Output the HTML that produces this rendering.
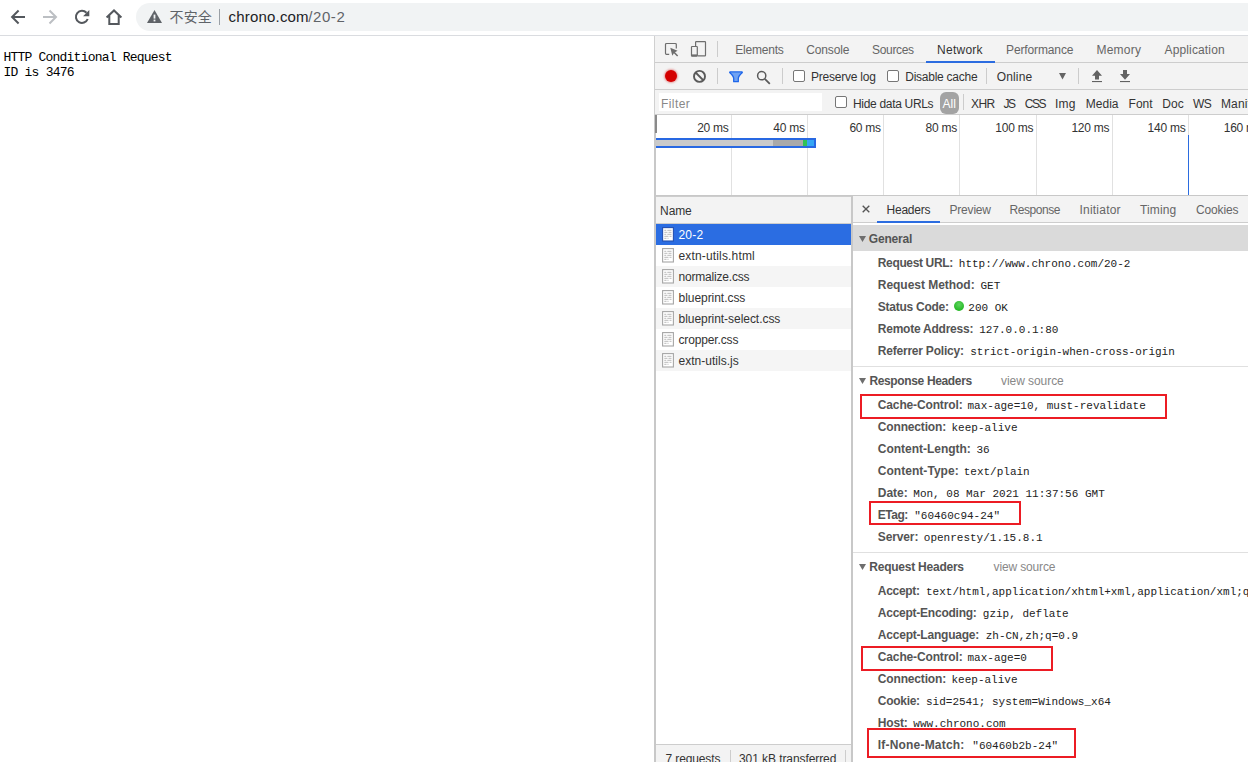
<!DOCTYPE html>
<html lang="zh"><head><meta charset="utf-8"><title>chrono.com/20-2</title>
<style>
html,body{margin:0;padding:0;background:#fff;}
body{width:1248px;height:762px;position:relative;overflow:hidden;font-family:'Liberation Sans','Noto Sans CJK SC',sans-serif;}
.a{position:absolute;}
.t{position:absolute;white-space:pre;}
#texts{position:absolute;left:0;top:0;width:1248px;height:762px;overflow:hidden;}
svg{position:absolute;overflow:visible;}
.cb{position:absolute;width:10px;height:10px;border:1px solid #767676;border-radius:2px;background:#fff;}
.sep{position:absolute;width:1px;height:16px;background:#ccc;}
.fi{position:absolute;width:12px;height:14px;}
.rb{position:absolute;border:2px solid #ec1c24;box-sizing:border-box;}

</style></head>
<body>
<!-- browser toolbar -->
<div class="a" style="left:0;top:0;width:1248px;height:35px;background:#fff;"></div>
<div class="a" style="left:136px;top:3px;width:1130px;height:28px;border-radius:14px;background:#f1f3f4;"></div>
<div class="a" style="left:0;top:35px;width:1248px;height:1px;background:#dadce0;"></div>
<!-- nav icons -->
<svg style="left:0;top:0" width="134" height="35" viewBox="0 0 134 35" fill="none" stroke-linecap="butt" stroke-linejoin="miter">
<path d="M25 17H13M18.600 10.500 12.100 17l6.500 6.500" stroke="#54585d" stroke-width="2"/>
<path d="M43 17h12M49.500 10.500 56 17l-6.500 6.500" stroke="#bcbfc3" stroke-width="2"/>
<path d="M86.500 12.700A6.100 6.100 0 1 0 87.700 19" stroke="#54585d" stroke-width="2"/>
<path d="M89.300 10v6.200h-6.200z" fill="#54585d" stroke="none"/>
<path d="M106.600 17.400 114 10.400l7.400 7M109.300 15.500v8.400h9.400v-8.400" stroke="#54585d" stroke-width="2"/>
</svg>
<svg style="left:147px;top:10px" width="15" height="13" viewBox="0 0 15 13"><path d="M7.5 0 15 13H0z" fill="#5f6368"/><rect x="6.600" y="4.600" width="1.8" height="4" fill="#f1f3f4"/><rect x="6.600" y="9.600" width="1.800" height="1.800" fill="#f1f3f4"/></svg>
<div class="a" style="left:219px;top:9px;width:1px;height:16px;background:#9aa0a6;"></div>

<!-- devtools frame -->
<div class="a" style="left:654px;top:36px;width:1px;height:79px;background:#d0d0d0;"></div>
<div class="a" style="left:654px;top:115px;width:2px;height:647px;background:#c8c8c8;z-index:2;"></div>
<div class="a" style="left:655px;top:36px;width:593px;height:79px;background:#f3f3f3;"></div>
<div class="a" style="left:655px;top:62px;width:593px;height:1px;background:#cdcdcd;"></div>
<div class="a" style="left:655px;top:89px;width:593px;height:1px;background:#cdcdcd;"></div>
<div class="a" style="left:655px;top:114px;width:593px;height:1px;background:#cdcdcd;"></div>
<!-- network tab underline -->
<div class="a" style="left:926px;top:61px;width:69px;height:2px;background:#2b6ce0;"></div>
<!-- tabbar icons -->
<svg style="left:664px;top:42px" width="16" height="16" viewBox="0 0 16 16"><path d="M12.300 6.500V2.500a1 1 0 0 0-1-1H2.500a1 1 0 0 0-1 1v8.800a1 1 0 0 0 1 1h2.700" fill="none" stroke="#6e6e6e" stroke-width="1.200"/><path d="M6.300 5.800l2 8 1.600-2.500 3.200 3.200 1.100-1.100-3.200-3.200 2.600-1.500z" fill="#6e6e6e"/></svg>
<svg style="left:690px;top:40px" width="17" height="18" viewBox="0 0 17 18"><path d="M5.600 6V2.200a.6.600 0 0 1 .6-.6h8.700a.6.600 0 0 1 .6.600v13.100a.6.600 0 0 1-.6.600H8" fill="none" stroke="#6e6e6e" stroke-width="1.200"/><rect x="1.500" y="6.500" width="5.800" height="9.600" rx=".6" fill="#f3f3f3" stroke="#6e6e6e" stroke-width="1.200"/><rect x="1.500" y="14.400" width="5.800" height="1.800" fill="#6e6e6e"/></svg>
<div class="sep" style="left:717px;top:41px;"></div>
<!-- toolbar 2 icons -->
<div class="a" style="left:665px;top:70px;width:12px;height:12px;border-radius:6px;background:#d40000;box-shadow:0 0 2px 1px rgba(212,0,0,.35);"></div>
<svg style="left:692px;top:69px" width="15" height="15" viewBox="0 0 15 15"><circle cx="7.500" cy="7.400" r="5.500" fill="none" stroke="#5a5a5a" stroke-width="1.900"/><path d="M3.600 3.500l7.800 7.800" stroke="#5a5a5a" stroke-width="1.900"/></svg>
<div class="sep" style="left:717px;top:68px;"></div>
<svg style="left:729px;top:71px" width="14" height="12" viewBox="0 0 14 12"><path d="M1.200.900h11.600q.9.100.3.900Q9.300 5.200 9.300 7.500v3.200H4.700V7.500Q4.700 5.200.9 1.800.3 1 1.200.9z" fill="#6fa2f3" stroke="#1e66ea" stroke-width="1.300" stroke-linejoin="round"/></svg>
<svg style="left:756.300px;top:69.600px" width="15" height="15" viewBox="0 0 15 15"><circle cx="5.700" cy="5.700" r="4.100" fill="none" stroke="#5a5a5a" stroke-width="1.500"/><path d="M8.800 8.800l5 5" stroke="#5a5a5a" stroke-width="1.800"/></svg>
<div class="sep" style="left:782px;top:68px;"></div>
<div class="cb" style="left:793px;top:70px;"></div>
<div class="cb" style="left:887px;top:70px;"></div>
<div class="sep" style="left:986px;top:68px;"></div>
<svg style="left:1059px;top:73px" width="7" height="7" viewBox="0 0 7 7"><path d="M0 0h7L3.500 6.500z" fill="#646464"/></svg>
<div class="sep" style="left:1078px;top:68px;"></div>
<svg style="left:1091px;top:70px" width="12" height="13" viewBox="0 0 12 13"><path d="M6 0l5 5.800H8v3.700H4V5.800H1z" fill="#626262"/><rect x="1" y="11" width="10" height="1.100" fill="#626262"/></svg>
<svg style="left:1119px;top:70px" width="12" height="13" viewBox="0 0 12 13"><path d="M6 9.700l5-5.800H8V0H4v3.900H1z" fill="#626262"/><rect x="1" y="11" width="10" height="1.100" fill="#626262"/></svg>
<!-- filter row -->
<div class="a" style="left:659px;top:93px;width:163px;height:18px;background:#fff;"></div>
<div class="cb" style="left:835px;top:96px;"></div>
<div class="a" style="left:940px;top:92px;width:19px;height:22px;border-radius:6px;background:#a3a3a3;"></div>
<div class="sep" style="left:963px;top:94px;height:16px;"></div>

<!-- overview -->
<div class="a" style="left:655px;top:115px;width:593px;height:80px;background:#fff;"></div>
<div class="a" style="left:731px;top:115px;width:1px;height:80px;background:#e1e1e1;"></div>
<div class="a" style="left:807px;top:115px;width:1px;height:80px;background:#e1e1e1;"></div>
<div class="a" style="left:883px;top:115px;width:1px;height:80px;background:#e1e1e1;"></div>
<div class="a" style="left:959px;top:115px;width:1px;height:80px;background:#e1e1e1;"></div>
<div class="a" style="left:1036px;top:115px;width:1px;height:80px;background:#e1e1e1;"></div>
<div class="a" style="left:1112px;top:115px;width:1px;height:80px;background:#e1e1e1;"></div>
<div class="a" style="left:1188px;top:115px;width:1px;height:80px;background:#e1e1e1;"></div>
<div class="a" style="left:1188px;top:135px;width:1px;height:60px;background:#2b6ce0;"></div>
<div class="a" style="left:655px;top:115px;width:2px;height:18px;background:#8a8a8a;z-index:3;"></div>
<!-- waterfall bar -->
<div class="a" style="left:655px;top:138px;width:161px;height:10px;background:#2868e2;"></div>
<div class="a" style="left:655px;top:140px;width:118px;height:6px;background:#cacaca;"></div>
<div class="a" style="left:773px;top:140px;width:30px;height:6px;background:#a9a9a9;"></div>
<div class="a" style="left:803px;top:140px;width:4px;height:6px;background:#2fc256;"></div>
<div class="a" style="left:807px;top:140px;width:7px;height:6px;background:#35a6f4;"></div>

<!-- split: names + details -->
<div class="a" style="left:655px;top:195px;width:593px;height:1px;background:#c8c8c8;"></div>
<div class="a" style="left:655px;top:196px;width:196px;height:1px;background:#cdcdcd;"></div>
<div class="a" style="left:655px;top:197px;width:196px;height:26px;background:#f3f3f3;"></div>
<div class="a" style="left:655px;top:223px;width:196px;height:1px;background:#cdcdcd;"></div>
<div class="a" style="left:655px;top:224px;width:196px;height:520px;background:#fff;"></div>
<div class="a" style="left:655px;top:224px;width:196px;height:21px;background:#2b6de2;"></div>
<div class="a" style="left:655px;top:266px;width:196px;height:21px;background:#f5f5f5;"></div>
<div class="a" style="left:655px;top:308px;width:196px;height:21px;background:#f5f5f5;"></div>
<div class="a" style="left:655px;top:350px;width:196px;height:21px;background:#f5f5f5;"></div>
<div class="a" style="left:851px;top:195px;width:2px;height:567px;background:#c8c8c8;"></div>
<!-- status bar -->
<div class="a" style="left:655px;top:744px;width:196px;height:1px;background:#cdcdcd;"></div>
<div class="a" style="left:655px;top:745px;width:196px;height:17px;background:#f3f3f3;"></div>
<div class="a" style="left:730px;top:750px;width:1px;height:12px;background:#cdcdcd;"></div>
<div class="a" style="left:845px;top:750px;width:1px;height:12px;background:#cdcdcd;"></div>
<!-- file icons -->
<svg style="left:662px;top:227.4px" width="12" height="15" viewBox="0 0 12 15"><rect x=".6" y=".6" width="10.800" height="13.400" fill="#fff" stroke="#2450b0" stroke-width="1.100"/><path d="M2.300 3.300h2M5.300 3.300h4.200M2.300 5.300h3.200M6.500 5.300h3M2.300 7.300h2M5.300 7.300h4.200M2.300 9.300h4.200M7.500 9.300h2M2.300 11.300h2.200M5.500 11.300h1" stroke="#bababa" stroke-width="1"/></svg>
<svg style="left:662px;top:248.4px" width="12" height="15" viewBox="0 0 12 15"><rect x=".6" y=".6" width="10.800" height="13.400" fill="#fff" stroke="#a6a6a6" stroke-width="1.100"/><path d="M2.300 3.300h2M5.300 3.300h4.200M2.300 5.300h3.200M6.500 5.300h3M2.300 7.300h2M5.300 7.300h4.200M2.300 9.300h4.200M7.500 9.300h2M2.300 11.300h2.200M5.500 11.300h1" stroke="#bababa" stroke-width="1"/></svg>
<svg style="left:662px;top:269.4px" width="12" height="15" viewBox="0 0 12 15"><rect x=".6" y=".6" width="10.800" height="13.400" fill="#fff" stroke="#a6a6a6" stroke-width="1.100"/><path d="M2.300 3.300h2M5.300 3.300h4.200M2.300 5.300h3.200M6.500 5.300h3M2.300 7.300h2M5.300 7.300h4.200M2.300 9.300h4.200M7.500 9.300h2M2.300 11.300h2.200M5.500 11.300h1" stroke="#bababa" stroke-width="1"/></svg>
<svg style="left:662px;top:290.4px" width="12" height="15" viewBox="0 0 12 15"><rect x=".6" y=".6" width="10.800" height="13.400" fill="#fff" stroke="#a6a6a6" stroke-width="1.100"/><path d="M2.300 3.300h2M5.300 3.300h4.200M2.300 5.300h3.200M6.500 5.300h3M2.300 7.300h2M5.300 7.300h4.200M2.300 9.300h4.200M7.500 9.300h2M2.300 11.300h2.200M5.500 11.300h1" stroke="#bababa" stroke-width="1"/></svg>
<svg style="left:662px;top:311.4px" width="12" height="15" viewBox="0 0 12 15"><rect x=".6" y=".6" width="10.800" height="13.400" fill="#fff" stroke="#a6a6a6" stroke-width="1.100"/><path d="M2.300 3.300h2M5.300 3.300h4.200M2.300 5.300h3.200M6.500 5.300h3M2.300 7.300h2M5.300 7.300h4.200M2.300 9.300h4.200M7.500 9.300h2M2.300 11.300h2.200M5.500 11.300h1" stroke="#bababa" stroke-width="1"/></svg>
<svg style="left:662px;top:332.4px" width="12" height="15" viewBox="0 0 12 15"><rect x=".6" y=".6" width="10.800" height="13.400" fill="#fff" stroke="#a6a6a6" stroke-width="1.100"/><path d="M2.300 3.300h2M5.300 3.300h4.200M2.300 5.300h3.200M6.500 5.300h3M2.300 7.300h2M5.300 7.300h4.200M2.300 9.300h4.200M7.500 9.300h2M2.300 11.300h2.200M5.500 11.300h1" stroke="#bababa" stroke-width="1"/></svg>
<svg style="left:662px;top:353.4px" width="12" height="15" viewBox="0 0 12 15"><rect x=".6" y=".6" width="10.800" height="13.400" fill="#fff" stroke="#a6a6a6" stroke-width="1.100"/><path d="M2.300 3.300h2M5.300 3.300h4.200M2.300 5.300h3.200M6.500 5.300h3M2.300 7.300h2M5.300 7.300h4.200M2.300 9.300h4.200M7.500 9.300h2M2.300 11.300h2.200M5.500 11.300h1" stroke="#bababa" stroke-width="1"/></svg>
<!-- details pane -->
<div class="a" style="left:853px;top:196px;width:395px;height:26px;background:#f3f3f3;"></div>
<div class="a" style="left:853px;top:222px;width:395px;height:1px;background:#cdcdcd;"></div>
<div class="a" style="left:877px;top:221px;width:63px;height:2px;background:#2b6ce0;"></div>
<div class="a" style="left:853px;top:223px;width:395px;height:539px;background:#fff;"></div>
<div class="a" style="left:853px;top:225px;width:395px;height:26px;background:#dadada;"></div>
<svg style="left:862px;top:204.500px" width="8" height="8" viewBox="0 0 8 8"><path d="M.7.700l6.600 6.600M7.300.7L.7 7.300" stroke="#555" stroke-width="1.350"/></svg>
<svg style="left:859px;top:236px" width="7" height="6" viewBox="0 0 7 6"><path d="M0 0h7L3.500 6z" fill="#6e6e6e"/></svg>
<svg style="left:859px;top:378px" width="7" height="6" viewBox="0 0 7 6"><path d="M0 0h7L3.500 6z" fill="#6e6e6e"/></svg>
<svg style="left:859px;top:564px" width="7" height="6" viewBox="0 0 7 6"><path d="M0 0h7L3.500 6z" fill="#6e6e6e"/></svg>
<div class="a" style="left:853px;top:366px;width:395px;height:1px;background:#e0e0e0;"></div>
<div class="a" style="left:853px;top:552px;width:395px;height:1px;background:#e0e0e0;"></div>
<div class="a" style="left:954px;top:301px;width:10px;height:10px;border-radius:5px;background:radial-gradient(circle at 50% 35%,#5fd45f,#0fae0f);"></div>

<div id="texts">
<span class="t" style="left:735.20px;top:44.00px;font:normal 12px/1 'Liberation Sans','Noto Sans CJK SC',sans-serif;color:#666;letter-spacing:-0.204px;">Elements</span>
<span class="t" style="left:806.30px;top:44.00px;font:normal 12px/1 'Liberation Sans','Noto Sans CJK SC',sans-serif;color:#666;letter-spacing:-0.147px;">Console</span>
<span class="t" style="left:872.10px;top:44.00px;font:normal 12px/1 'Liberation Sans','Noto Sans CJK SC',sans-serif;color:#666;letter-spacing:-0.347px;">Sources</span>
<span class="t" style="left:937.10px;top:44.00px;font:normal 12px/1 'Liberation Sans','Noto Sans CJK SC',sans-serif;color:#333;letter-spacing:0.241px;">Network</span>
<span class="t" style="left:1006.10px;top:44.00px;font:normal 12px/1 'Liberation Sans','Noto Sans CJK SC',sans-serif;color:#666;letter-spacing:-0.137px;">Performance</span>
<span class="t" style="left:1096.50px;top:44.00px;font:normal 12px/1 'Liberation Sans','Noto Sans CJK SC',sans-serif;color:#666;letter-spacing:0.209px;">Memory</span>
<span class="t" style="left:1164.50px;top:44.00px;font:normal 12px/1 'Liberation Sans','Noto Sans CJK SC',sans-serif;color:#666;letter-spacing:0.144px;">Application</span>
<span class="t" style="left:811.00px;top:71.00px;font:normal 12px/1 'Liberation Sans','Noto Sans CJK SC',sans-serif;color:#333;letter-spacing:-0.231px;">Preserve log</span>
<span class="t" style="left:905.30px;top:71.00px;font:normal 12px/1 'Liberation Sans','Noto Sans CJK SC',sans-serif;color:#333;letter-spacing:-0.260px;">Disable cache</span>
<span class="t" style="left:996.70px;top:71.00px;font:normal 12px/1 'Liberation Sans','Noto Sans CJK SC',sans-serif;color:#333;letter-spacing:0.152px;">Online</span>
<span class="t" style="left:661.00px;top:98.00px;font:normal 12px/1 'Liberation Sans','Noto Sans CJK SC',sans-serif;color:#888;letter-spacing:0.438px;">Filter</span>
<span class="t" style="left:853.00px;top:98.00px;font:normal 12px/1 'Liberation Sans','Noto Sans CJK SC',sans-serif;color:#333;letter-spacing:-0.316px;">Hide data URLs</span>
<span class="t" style="left:942.50px;top:98.00px;font:normal 12px/1 'Liberation Sans','Noto Sans CJK SC',sans-serif;color:#fff;letter-spacing:-0.015px;">All</span>
<span class="t" style="left:971.00px;top:98.00px;font:normal 12px/1 'Liberation Sans','Noto Sans CJK SC',sans-serif;color:#333;letter-spacing:-0.615px;">XHR</span>
<span class="t" style="left:1003.40px;top:98.00px;font:normal 12px/1 'Liberation Sans','Noto Sans CJK SC',sans-serif;color:#333;letter-spacing:-1.358px;">JS</span>
<span class="t" style="left:1024.70px;top:98.00px;font:normal 12px/1 'Liberation Sans','Noto Sans CJK SC',sans-serif;color:#333;letter-spacing:-1.462px;">CSS</span>
<span class="t" style="left:1055.00px;top:98.00px;font:normal 12px/1 'Liberation Sans','Noto Sans CJK SC',sans-serif;color:#333;letter-spacing:0.161px;">Img</span>
<span class="t" style="left:1085.70px;top:98.00px;font:normal 12px/1 'Liberation Sans','Noto Sans CJK SC',sans-serif;color:#333;letter-spacing:0.042px;">Media</span>
<span class="t" style="left:1128.50px;top:98.00px;font:normal 12px/1 'Liberation Sans','Noto Sans CJK SC',sans-serif;color:#333;letter-spacing:0.046px;">Font</span>
<span class="t" style="left:1162.30px;top:98.00px;font:normal 12px/1 'Liberation Sans','Noto Sans CJK SC',sans-serif;color:#333;letter-spacing:0.019px;">Doc</span>
<span class="t" style="left:1193.00px;top:98.00px;font:normal 12px/1 'Liberation Sans','Noto Sans CJK SC',sans-serif;color:#333;letter-spacing:-0.522px;">WS</span>
<span class="t" style="left:1221.00px;top:98.00px;font:normal 12px/1 'Liberation Sans','Noto Sans CJK SC',sans-serif;color:#333;letter-spacing:0.118px;">Manifest</span>
<span class="t" style="left:697.16px;top:122.00px;font:normal 12px/1 'Liberation Sans','Noto Sans CJK SC',sans-serif;color:#333;letter-spacing:-0.250px;">20 ms</span>
<span class="t" style="left:773.30px;top:122.00px;font:normal 12px/1 'Liberation Sans','Noto Sans CJK SC',sans-serif;color:#333;letter-spacing:-0.250px;">40 ms</span>
<span class="t" style="left:849.44px;top:122.00px;font:normal 12px/1 'Liberation Sans','Noto Sans CJK SC',sans-serif;color:#333;letter-spacing:-0.250px;">60 ms</span>
<span class="t" style="left:925.58px;top:122.00px;font:normal 12px/1 'Liberation Sans','Noto Sans CJK SC',sans-serif;color:#333;letter-spacing:-0.250px;">80 ms</span>
<span class="t" style="left:995.30px;top:122.00px;font:normal 12px/1 'Liberation Sans','Noto Sans CJK SC',sans-serif;color:#333;letter-spacing:-0.250px;">100 ms</span>
<span class="t" style="left:1071.44px;top:122.00px;font:normal 12px/1 'Liberation Sans','Noto Sans CJK SC',sans-serif;color:#333;letter-spacing:-0.250px;">120 ms</span>
<span class="t" style="left:1147.58px;top:122.00px;font:normal 12px/1 'Liberation Sans','Noto Sans CJK SC',sans-serif;color:#333;letter-spacing:-0.250px;">140 ms</span>
<span class="t" style="left:1223.72px;top:122.00px;font:normal 12px/1 'Liberation Sans','Noto Sans CJK SC',sans-serif;color:#333;letter-spacing:-0.250px;">160 ms</span>
<span class="t" style="left:660.10px;top:205.00px;font:normal 12px/1 'Liberation Sans','Noto Sans CJK SC',sans-serif;color:#333;letter-spacing:-0.104px;">Name</span>
<span class="t" style="left:678.50px;top:229.00px;font:normal 12px/1 'Liberation Sans','Noto Sans CJK SC',sans-serif;color:#fff;letter-spacing:0.192px;">20-2</span>
<span class="t" style="left:678.50px;top:250.00px;font:normal 12px/1 'Liberation Sans','Noto Sans CJK SC',sans-serif;color:#333;letter-spacing:0.158px;">extn-utils.html</span>
<span class="t" style="left:678.50px;top:271.00px;font:normal 12px/1 'Liberation Sans','Noto Sans CJK SC',sans-serif;color:#333;letter-spacing:-0.197px;">normalize.css</span>
<span class="t" style="left:678.50px;top:292.00px;font:normal 12px/1 'Liberation Sans','Noto Sans CJK SC',sans-serif;color:#333;letter-spacing:-0.044px;">blueprint.css</span>
<span class="t" style="left:678.50px;top:313.00px;font:normal 12px/1 'Liberation Sans','Noto Sans CJK SC',sans-serif;color:#333;letter-spacing:-0.046px;">blueprint-select.css</span>
<span class="t" style="left:678.50px;top:334.00px;font:normal 12px/1 'Liberation Sans','Noto Sans CJK SC',sans-serif;color:#333;letter-spacing:-0.142px;">cropper.css</span>
<span class="t" style="left:678.50px;top:355.00px;font:normal 12px/1 'Liberation Sans','Noto Sans CJK SC',sans-serif;color:#333;letter-spacing:0.021px;">extn-utils.js</span>
<span class="t" style="left:665.50px;top:753.00px;font:normal 12px/1 'Liberation Sans','Noto Sans CJK SC',sans-serif;color:#333;letter-spacing:-0.125px;">7 requests</span>
<span class="t" style="left:739.00px;top:753.00px;font:normal 12px/1 'Liberation Sans','Noto Sans CJK SC',sans-serif;color:#333;letter-spacing:-0.079px;">301 kB transferred</span>
<span class="t" style="left:886.50px;top:204.00px;font:normal 12px/1 'Liberation Sans','Noto Sans CJK SC',sans-serif;color:#333;letter-spacing:-0.223px;">Headers</span>
<span class="t" style="left:949.50px;top:204.00px;font:normal 12px/1 'Liberation Sans','Noto Sans CJK SC',sans-serif;color:#666;letter-spacing:-0.198px;">Preview</span>
<span class="t" style="left:1009.50px;top:204.00px;font:normal 12px/1 'Liberation Sans','Noto Sans CJK SC',sans-serif;color:#666;letter-spacing:-0.431px;">Response</span>
<span class="t" style="left:1079.50px;top:204.00px;font:normal 12px/1 'Liberation Sans','Noto Sans CJK SC',sans-serif;color:#666;letter-spacing:0.216px;">Initiator</span>
<span class="t" style="left:1140.00px;top:204.00px;font:normal 12px/1 'Liberation Sans','Noto Sans CJK SC',sans-serif;color:#666;letter-spacing:0.123px;">Timing</span>
<span class="t" style="left:1196.00px;top:204.00px;font:normal 12px/1 'Liberation Sans','Noto Sans CJK SC',sans-serif;color:#666;letter-spacing:-0.151px;">Cookies</span>
<span class="t" style="left:868.80px;top:233.00px;font:bold 12px/1 'Liberation Sans','Noto Sans CJK SC',sans-serif;color:#545454;letter-spacing:-0.172px;">General</span>
<span class="t" style="left:869.40px;top:375.00px;font:bold 12px/1 'Liberation Sans','Noto Sans CJK SC',sans-serif;color:#545454;letter-spacing:-0.353px;">Response Headers</span>
<span class="t" style="left:1001.00px;top:375.00px;font:normal 12px/1 'Liberation Sans','Noto Sans CJK SC',sans-serif;color:#888;letter-spacing:-0.060px;">view source</span>
<span class="t" style="left:869.30px;top:561.00px;font:bold 12px/1 'Liberation Sans','Noto Sans CJK SC',sans-serif;color:#545454;letter-spacing:-0.236px;">Request Headers</span>
<span class="t" style="left:993.60px;top:561.00px;font:normal 12px/1 'Liberation Sans','Noto Sans CJK SC',sans-serif;color:#888;letter-spacing:-0.151px;">view source</span>
<span class="t" style="left:877.80px;top:257.00px;font:bold 12px/1 'Liberation Sans','Noto Sans CJK SC',sans-serif;color:#545454;letter-spacing:-0.362px;">Request URL:</span>
<span class="t" style="left:958.80px;top:259.00px;font:normal 11px/1 'Liberation Mono',monospace;color:#222;">http://www.chrono.com/20-2</span>
<span class="t" style="left:877.80px;top:279.00px;font:bold 12px/1 'Liberation Sans','Noto Sans CJK SC',sans-serif;color:#545454;letter-spacing:-0.036px;">Request Method:</span>
<span class="t" style="left:980.50px;top:281.00px;font:normal 11px/1 'Liberation Mono',monospace;color:#222;">GET</span>
<span class="t" style="left:877.80px;top:301.00px;font:bold 12px/1 'Liberation Sans','Noto Sans CJK SC',sans-serif;color:#545454;letter-spacing:-0.260px;">Status Code:</span>
<span class="t" style="left:968.30px;top:303.00px;font:normal 11px/1 'Liberation Mono',monospace;color:#222;">200 OK</span>
<span class="t" style="left:877.80px;top:323.00px;font:bold 12px/1 'Liberation Sans','Noto Sans CJK SC',sans-serif;color:#545454;letter-spacing:-0.235px;">Remote Address:</span>
<span class="t" style="left:979.20px;top:325.00px;font:normal 11px/1 'Liberation Mono',monospace;color:#222;">127.0.0.1:80</span>
<span class="t" style="left:877.80px;top:345.00px;font:bold 12px/1 'Liberation Sans','Noto Sans CJK SC',sans-serif;color:#545454;letter-spacing:-0.217px;">Referrer Policy:</span>
<span class="t" style="left:970.20px;top:347.00px;font:normal 11px/1 'Liberation Mono',monospace;color:#222;">strict-origin-when-cross-origin</span>
<span class="t" style="left:877.80px;top:399.00px;font:bold 12px/1 'Liberation Sans','Noto Sans CJK SC',sans-serif;color:#545454;letter-spacing:-0.141px;">Cache-Control:</span>
<span class="t" style="left:967.50px;top:401.00px;font:normal 11px/1 'Liberation Mono',monospace;color:#222;">max-age=10, must-revalidate</span>
<span class="t" style="left:877.80px;top:421.00px;font:bold 12px/1 'Liberation Sans','Noto Sans CJK SC',sans-serif;color:#545454;letter-spacing:-0.164px;">Connection:</span>
<span class="t" style="left:951.50px;top:423.00px;font:normal 11px/1 'Liberation Mono',monospace;color:#222;">keep-alive</span>
<span class="t" style="left:877.80px;top:443.00px;font:bold 12px/1 'Liberation Sans','Noto Sans CJK SC',sans-serif;color:#545454;letter-spacing:-0.021px;">Content-Length:</span>
<span class="t" style="left:976.50px;top:445.00px;font:normal 11px/1 'Liberation Mono',monospace;color:#222;">36</span>
<span class="t" style="left:877.80px;top:465.00px;font:bold 12px/1 'Liberation Sans','Noto Sans CJK SC',sans-serif;color:#545454;letter-spacing:0.036px;">Content-Type:</span>
<span class="t" style="left:963.70px;top:467.00px;font:normal 11px/1 'Liberation Mono',monospace;color:#222;">text/plain</span>
<span class="t" style="left:877.80px;top:487.00px;font:bold 12px/1 'Liberation Sans','Noto Sans CJK SC',sans-serif;color:#545454;letter-spacing:-0.023px;">Date:</span>
<span class="t" style="left:913.30px;top:489.00px;font:normal 11px/1 'Liberation Mono',monospace;color:#222;">Mon, 08 Mar 2021 11:37:56 GMT</span>
<span class="t" style="left:877.80px;top:509.00px;font:bold 12px/1 'Liberation Sans','Noto Sans CJK SC',sans-serif;color:#545454;letter-spacing:-0.511px;">ETag:</span>
<span class="t" style="left:914.20px;top:511.00px;font:normal 11px/1 'Liberation Mono',monospace;color:#222;">&quot;60460c94-24&quot;</span>
<span class="t" style="left:877.80px;top:531.00px;font:bold 12px/1 'Liberation Sans','Noto Sans CJK SC',sans-serif;color:#545454;letter-spacing:-0.125px;">Server:</span>
<span class="t" style="left:923.80px;top:533.00px;font:normal 11px/1 'Liberation Mono',monospace;color:#222;">openresty/1.15.8.1</span>
<span class="t" style="left:877.80px;top:585.00px;font:bold 12px/1 'Liberation Sans','Noto Sans CJK SC',sans-serif;color:#545454;letter-spacing:-0.288px;">Accept:</span>
<span class="t" style="left:926.00px;top:587.00px;font:normal 11px/1 'Liberation Mono',monospace;color:#222;">text/html,application/xhtml+xml,application/xml;q=0.9,image/avif,image/webp</span>
<span class="t" style="left:877.80px;top:607.00px;font:bold 12px/1 'Liberation Sans','Noto Sans CJK SC',sans-serif;color:#545454;letter-spacing:-0.242px;">Accept-Encoding:</span>
<span class="t" style="left:982.80px;top:609.00px;font:normal 11px/1 'Liberation Mono',monospace;color:#222;">gzip, deflate</span>
<span class="t" style="left:877.80px;top:629.00px;font:bold 12px/1 'Liberation Sans','Noto Sans CJK SC',sans-serif;color:#545454;letter-spacing:-0.212px;">Accept-Language:</span>
<span class="t" style="left:985.70px;top:631.00px;font:normal 11px/1 'Liberation Mono',monospace;color:#222;">zh-CN,zh;q=0.9</span>
<span class="t" style="left:877.80px;top:651.00px;font:bold 12px/1 'Liberation Sans','Noto Sans CJK SC',sans-serif;color:#545454;letter-spacing:-0.141px;">Cache-Control:</span>
<span class="t" style="left:967.50px;top:653.00px;font:normal 11px/1 'Liberation Mono',monospace;color:#222;">max-age=0</span>
<span class="t" style="left:877.80px;top:673.00px;font:bold 12px/1 'Liberation Sans','Noto Sans CJK SC',sans-serif;color:#545454;letter-spacing:-0.164px;">Connection:</span>
<span class="t" style="left:951.50px;top:675.00px;font:normal 11px/1 'Liberation Mono',monospace;color:#222;">keep-alive</span>
<span class="t" style="left:877.80px;top:695.00px;font:bold 12px/1 'Liberation Sans','Noto Sans CJK SC',sans-serif;color:#545454;letter-spacing:-0.288px;">Cookie:</span>
<span class="t" style="left:926.00px;top:697.00px;font:normal 11px/1 'Liberation Mono',monospace;color:#222;">sid=2541; system=Windows_x64</span>
<span class="t" style="left:877.80px;top:717.00px;font:bold 12px/1 'Liberation Sans','Noto Sans CJK SC',sans-serif;color:#545454;letter-spacing:-0.154px;">Host:</span>
<span class="t" style="left:913.30px;top:719.00px;font:normal 11px/1 'Liberation Mono',monospace;color:#222;">www.chrono.com</span>
<span class="t" style="left:877.80px;top:739.00px;font:bold 12px/1 'Liberation Sans','Noto Sans CJK SC',sans-serif;color:#545454;letter-spacing:0.193px;">If-None-Match:</span>
<span class="t" style="left:972.30px;top:741.00px;font:normal 11px/1 'Liberation Mono',monospace;color:#222;">&quot;60460b2b-24&quot;</span>
<span class="t" style="left:169.50px;top:10.00px;font:normal 14px/1 'Liberation Sans','Noto Sans CJK SC',sans-serif;color:#5f6368;letter-spacing:0.167px;">不安全</span>
<span class="t" style="left:228.50px;top:9.00px;font:normal 15px/1 'Liberation Sans','Noto Sans CJK SC',sans-serif;color:#202124;letter-spacing:0.192px;">chrono.com</span>
<span class="t" style="left:308.30px;top:9.00px;font:normal 15px/1 'Liberation Sans','Noto Sans CJK SC',sans-serif;color:#5f6368;letter-spacing:0.559px;">/20-2</span>
<span class="t" style="left:3.50px;top:51.00px;font:normal 13px/1 'Liberation Mono',monospace;color:#000;letter-spacing:-0.789px;">HTTP Conditional Request</span>
<span class="t" style="left:3.50px;top:66.00px;font:normal 13px/1 'Liberation Mono',monospace;color:#000;letter-spacing:-0.772px;">ID is 3476</span>
</div>
<div class="rb" style="left:860px;top:394px;width:307px;height:25px;"></div>
<div class="rb" style="left:869px;top:501px;width:152px;height:24px;"></div>
<div class="rb" style="left:861px;top:646px;width:192px;height:25px;"></div>
<div class="rb" style="left:867px;top:728px;width:209px;height:30px;"></div>
</body></html>
